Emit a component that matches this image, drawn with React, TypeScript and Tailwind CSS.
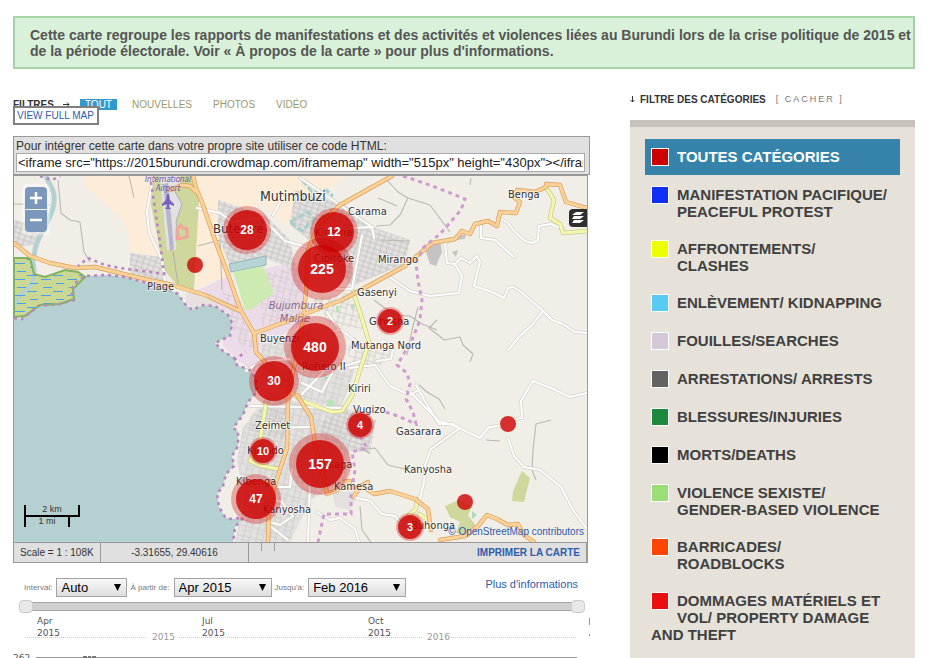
import React from "react";

type Place = { x: number; y: number; name: string; size?: number };
type Cluster = { x: number; y: number; count: number; outer: number; inner: number; size: number };

const places: Place[] = [
  { x: 260, y: 201, name: "Mutimbuzi", size: 14 },
  { x: 213, y: 233, name: "Buterere", size: 13 },
  { x: 348, y: 215, name: "Carama" },
  { x: 315, y: 236, name: "Kinama" },
  { x: 314, y: 262, name: "Cibitoke" },
  { x: 378, y: 263, name: "Mirango" },
  { x: 508, y: 198, name: "Benga" },
  { x: 147, y: 290, name: "Plage" },
  { x: 357, y: 296, name: "Gasenyi" },
  { x: 369, y: 325, name: "Gihosha" },
  { x: 260, y: 342, name: "Buyenzi" },
  { x: 351, y: 349, name: "Mutanga Nord" },
  { x: 302, y: 370, name: "Rohero II" },
  { x: 348, y: 392, name: "Kiriri" },
  { x: 353, y: 413, name: "Vugizo" },
  { x: 255, y: 429, name: "Zeimet" },
  { x: 396, y: 435, name: "Gasarara" },
  { x: 247, y: 454, name: "Kinindo" },
  { x: 404, y: 473, name: "Kanyosha" },
  { x: 314, y: 468, name: "Musaga" },
  { x: 236, y: 485, name: "Kibenga" },
  { x: 334, y: 490, name: "Kamesa" },
  { x: 263, y: 513, name: "Kanyosha" },
  { x: 411, y: 529, name: "Buhonga" },
];

const clusters: Cluster[] = [
  { x: 247, y: 230, count: 28, outer: 24, inner: 20, size: 12 },
  { x: 334, y: 232, count: 12, outer: 24, inner: 20, size: 12 },
  { x: 322, y: 269, count: 225, outer: 31, inner: 24, size: 14 },
  { x: 390, y: 321, count: 2, outer: 14, inner: 12, size: 11 },
  { x: 315, y: 347, count: 480, outer: 31, inner: 24, size: 14 },
  { x: 274, y: 381, count: 30, outer: 25, inner: 20, size: 12 },
  { x: 360, y: 425, count: 4, outer: 14, inner: 12, size: 11 },
  { x: 263, y: 451, count: 10, outer: 14, inner: 12, size: 11 },
  { x: 320, y: 464, count: 157, outer: 31, inner: 24, size: 14 },
  { x: 256, y: 499, count: 47, outer: 25, inner: 20, size: 12 },
  { x: 410, y: 527, count: 3, outer: 14, inner: 12, size: 11 },
];

const coast =
  "M14 318L22 319 38 306 60 304 74 300 71 292 75 283 85 276 108 275 125 277 143 282 165 288 178 294 185 304 192 310 203 305 215 306 228 315 232 323 230 336 215 343 223 351 234 358 237 365 250 370 257 380 256 393 248 402 243 415 233 428 238 431 238 446 232 456 234 466 226 474 223 486 217 494 219 507 225 517 231 519 243 518 235 527 233 542";

const mainRoads = [
  "M14 243L30 256 50 263 75 268 95 267 140 278 172 285 205 295 240 311",
  "M170 190L182 185 190 186 196 192",
  "M193 176L196 188 203 205 215 240 230 280 241 311 254 333 256 352 270 368 284 380",
  "M392 176L340 205 318 225 308 250 306 290 304 312 300 340 293 372 288 398 287 448 274 488 269 510 268 542",
  "M255 333L285 322 320 308 342 300 370 285 405 266 418 255 432 243 455 239 462 231 470 234 475 224 488 221 497 226 500 212 516 213 520 202 513 197 517 190 535 192 546 187 546 184 560 185 566 202 587 208",
  "M297 395L311 417 316 450 322 470 327 494 340 489 344 482 350 481 349 487 365 488 374 494 390 491 415 499 428 509 431 530",
  "M353 497L361 486 368 482",
  "M440 540L465 536 478 526 487 515 497 519 508 525 518 524 524 535 534 542",
];
const yellowRoads = [
  "M353 292L360 312 369 342 360 370 352 396 342 411 332 412 300 400 287 388",
  "M266 404L260 440 250 461 262 466 279 469",
  "M546 187L554 200 550 218 560 224 563 233 587 231",
  "M417 499L416 509 409 515 419 525M419 514L428 520",
];
const whiteRoads = [
  "M153 176L147 212 149 232 162 260 165 281",
  "M300 178L340 205 372 227 374 238M352 228L373 227M362 235L352 289 334 289",
  "M197 208L220 213 233 222 262 218 285 241 318 250M273 215L283 197 300 198",
  "M388 276L410 291 430 296 459 293 462 276 455 264 447 263 445 244 451 239M455 264L461 258 470 263 477 256 480 262 474 286 492 292 504 298 508 288 513 287 520 291 543 311 552 320 563 324 575 332 587 333M543 311L532 325 518 338 508 350",
  "M481 222L481 238 495 240 514 257M498 217L508 223 514 231 525 241 532 243 538 240 539 226 551 224 563 229",
  "M409 391L432 414 439 421 455 426 480 438 489 427 500 426 508 420 522 418 521 401 533 381 551 388 570 397 587 393",
  "M416 385L426 403 439 424 452 424 460 428 431 449 425 465 424 483 419 502",
  "M508 438L514 456 524 467 540 470 561 487 573 510 587 529",
  "M353 497L370 501 382 514 395 516 403 525",
  "M327 332L341 330 353 339 366 348 384 341 393 349 391 359 377 361M327 312L338 329",
  "M350 368L375 365 390 386 410 395 417 391",
  "M246 371L260 362 290 359M250 406L345 408M255 428L311 427M272 487L290 487 292 469",
  "M268 498L282 502 293 516 280 525 270 522M270 526L288 540M310 480L308 542",
  "M317 512L330 520 340 518 355 529 359 542M302 383L322 392 334 369 364 360M302 394L330 365",
];
const greyRoads = [
  "M58 180L61 213 70 220 80 222 84 252 90 262",
  "M14 204L50 205M129 176L134 198",
  "M385 178L398 192 408 198 430 205 450 232M408 198L400 215 390 225 376 226M397 206L378 198M380 240L410 241",
  "M419 385L427 392 439 399 445 409",
  "M374 300L394 315 410 316 422 324 437 330M437 320L429 328 438 335 444 340 460 337 463 345 473 354 470 362",
  "M418 307L412 330 407 355M471 178L470 185",
  "M360 450L375 448 388 465 405 469 420 467M361 447L370 454",
  "M551 420L536 424 533 450 532 470 536 480M500 441L486 440",
  "M360 506L362 530 371 542M198 246L220 240 222 290",
];
const boundary =
  "M403 176L424 183 448 192 465 199 461 210 440 234 424 247 416 263 418 281 422 300 420 320 412 340 402 357 397 365 407 373 410 384 406 399 413 412 416 424 398 416 382 411M360 436L367 448 352 452 355 470 351 495 351 514 324 514 318 542";

const districts = [
  "M295 190L345 205 375 228 410 240 405 264 352 286 316 245 290 225Z",
  "M14 220L38 225 38 245 20 246 14 242Z",
  "M130 253L160 257 166 283 130 276Z",
  "M218 200L265 215 290 240 296 270 265 258 230 267 218 235Z",
  "M262 345L305 330 355 370 340 410 290 395 258 372Z",
  "M268 394L335 412 350 450 345 480 310 500 290 542 235 542 245 500 237 460 243 428Z",
  "M345 408L376 420 370 452 330 450 318 425Z",
  "M360 492L350 510 335 507 332 491Z",
];

const categories = [
  { label: "TOUTES CATÉGORIES", color: "bg-[#cc0000]" },
  { label: "MANIFESTATION PACIFIQUE/ PEACEFUL PROTEST", color: "bg-[#102ff5]" },
  { label: "AFFRONTEMENTS/ CLASHES", color: "bg-[#eeff00]" },
  { label: "ENLÈVEMENT/ KIDNAPPING", color: "bg-[#57cbf2]" },
  { label: "FOUILLES/SEARCHES", color: "bg-[#d4c8d6]" },
  { label: "ARRESTATIONS/ ARRESTS", color: "bg-[#636363]" },
  { label: "BLESSURES/INJURIES", color: "bg-[#1d873b]" },
  { label: "MORTS/DEATHS", color: "bg-black" },
  { label: "VIOLENCE SEXISTE/ GENDER-BASED VIOLENCE", color: "bg-[#9ade77]" },
  { label: "BARRICADES/ ROADBLOCKS", color: "bg-[#ff4400]" },
  { label: "DOMMAGES MATÉRIELS ET VOL/ PROPERTY DAMAGE AND THEFT", color: "bg-[#eb0e0e]" },
];

function Roads({ paths, casing, fill, width }: { paths: string[]; casing: string; fill: string; width: number }) {
  return (
    <g fill="none" strokeLinejoin="round" strokeLinecap="round">
      {paths.map((d) => (
        <path key={"c" + d} d={d} stroke={casing} strokeWidth={width + 1.4} />
      ))}
      {paths.map((d) => (
        <path key={d} d={d} stroke={fill} strokeWidth={width} />
      ))}
    </g>
  );
}

function MapDrawing() {
  return (
    <svg viewBox="14 176 573 366" preserveAspectRatio="xMidYMid slice" className="block h-[366px] w-full">
      <defs>
        <pattern id="streets" width="13" height="10" patternUnits="userSpaceOnUse" patternTransform="rotate(14)">
          <path d="M0 1H13M0 5H8M2 0V10M8 1V10" stroke="#cbc9c7" strokeWidth=".8" fill="none" />
        </pattern>
        <pattern id="blocks" width="6" height="5" patternUnits="userSpaceOnUse" patternTransform="rotate(18)">
          <path d="M0 1H6M1 0V5" stroke="#c3c2c1" strokeWidth=".9" fill="none" />
        </pattern>
        <pattern id="marsh" width="26" height="16" patternUnits="userSpaceOnUse">
          <path d="M1 3.500H11M15 7.500H25M4 11.500H12M17 15.500H26" stroke="#4aa0f0" strokeWidth="1.200" fill="none" />
        </pattern>
      </defs>
      <rect x="14" y="176" width="573" height="366" fill="#f1eee8" />

      <g fill="#fcecd8">
        <path d="M84 176H150L153 200 146 215 155 237 160 257 130 252 130 236 118 215 84 185Z" />
        <path d="M195 176H220L205 196 240 262 228 276 195 288Z" />
        <path d="M222 176H345L300 215 290 228 262 205 215 215 205 196Z" />
      </g>
      <path d="M152 176H193L199 200 194 290 176 284 164 270 157 235 151 205Z" fill="#d0d79c" />
      <path d="M160 176H180V182L174 190 182 205 176 222 176 250 167 250Z" fill="#e3e0e4" />
      <path d="M163 184L168 183 174 249 170 251Z" fill="#b7b5ca" />
      <path d="M174 190L182 204 176 222 179 236M173 251L178 284" fill="none" stroke="#aaa8b4" strokeWidth=".9" />
      <path d="M198 290L228 276 240 311 265 268 296 262 303 285 302 325 262 345 255 372 240 362 222 345 232 325 228 314 212 303Z" fill="#ecdce9" />
      <path d="M195 290L212 303 225 310 205 307 192 310 186 302 185 294Z" fill="#e7e0df" />

      {districts.map((d) => (
        <path key={d} d={d} fill="#e3e1df" />
      ))}
      <g fill="url(#streets)">
        <path d={districts[4]} />
        <path d={districts[5]} />
        <path d="M222 290L240 300 262 350 240 345 232 325Z" />
        <path d="M260 275L300 265 302 325 262 325Z" />
        <path d="M310 300L352 292 366 330 330 325Z" />
        <path d="M345 345L395 350 380 365 352 368Z" />
      </g>
      <g fill="url(#blocks)">
        <path d={districts[0]} />
        <path d={districts[1]} />
        <path d={districts[2]} />
        <path d={districts[3]} />
        <path d={districts[6]} />
        <path d="M268 392L286 392 284 440 250 430Z" />
      </g>
      <path d="M424 246L440 241 442 252 436 266 430 264ZM455 237L466 234 465 239 457 240ZM452 252L458 250 456 257Z" fill="#c6c4c2" />

      <path d="M229 264L266 256 266 265 231 272Z" fill="#b7d4d4" stroke="#8db5b5" />
      <path d="M233 272L263 266 274 292 251 310 245 310Z" fill="#cdebb0" />
      <path d="M290 222L308 212 314 219 302 231ZM302 180L312 192 326 190 333 196" fill="none" stroke="#a9cfcc" strokeWidth="3" strokeDasharray="7 2" />
      <path d="M522 471L530 478 524 502 512 501 513 491ZM445 506L459 500 472 507 468 515 476 526 471 536 456 533 460 522 450 517Z" fill="#d0d79c" />
      <path d="M472 511L477 515 472 519ZM328 399L334 402 331 406ZM324 374L328 378 325 381Z" fill="#a9dcb8" />
      <path d="M327 400h7v6h-7zM336 306h3v6h-3zM351 304h3v5h-3z" fill="#b5e3b5" />

      <path d={coast + "H14Z"} fill="#b5d0d0" />
      <path d="M46 176C50 188 57 190 53 208C49 225 33 240 34 260" fill="none" stroke="#b5d0d0" strokeWidth="5" />
      <path d="M14 258H30L34 274 45 277 65 270 78 272 85 277 73 289 74 299 60 304 40 305 25 316 14 317Z" fill="#cbd893" />
      <path d="M33 260C38 280 30 288 20 295L14 308" fill="none" stroke="#b5d0d0" strokeWidth="4" />
      <path d="M14 258H30L34 274 45 277 65 270 78 272 85 277 73 289 74 299 60 304 40 305 25 316 14 317Z" fill="url(#marsh)" stroke="#7fb35c" strokeWidth="2" />

      <g fill="none" stroke="#bbb8b3" strokeWidth="1.1" strokeLinejoin="round">
        {greyRoads.map((d) => (
          <path key={d} d={d} />
        ))}
      </g>
      <Roads paths={whiteRoads} casing="#d4d1cb" fill="#ffffff" width={2} />
      <Roads paths={yellowRoads} casing="#c9cc8a" fill="#f5f7b0" width={3} />
      <Roads paths={mainRoads} casing="#d6a15b" fill="#fdd197" width={3} />

      <path d={boundary} fill="none" stroke="#cf9ccf" strokeWidth="3" strokeDasharray="4 4" />
      <g fill="none" stroke="#b987bd" strokeWidth="2.600" strokeDasharray="3 4">
        <path d={coast} />
        <path d="M151 182L156 215 161 250 164 274 150 272 120 268 105 265 88 258 78 266" />
        <path d="M40 176L52 180 60 176M234 360L246 352" />
      </g>

      <path
        d="M167 194L169 194 170 200 174 204 174 206 169 204 169 207 171 209 165 209 167 207 167 204 162 206 162 204 166 200Z"
        fill="#7a5fc0"
      />
      <path d="M177 229L181 225 183 228 187 229 187 237 177 239Z" fill="none" stroke="#f3a59a" strokeWidth="3" />

      <g fontFamily="'DejaVu Sans Condensed', 'DejaVu Sans', sans-serif" fontStyle="italic" textAnchor="middle">
        <g fontSize="8" fill="#6a51a8">
          <text x="168" y="182">International</text>
          <text x="168" y="191">Airport</text>
        </g>
        <g fontSize="11" fill="#8a6591">
          <text x="296" y="309">Bujumbura</text>
          <text x="295" y="322">Mairie</text>
        </g>
      </g>
      <g
        fontFamily="'DejaVu Sans Condensed', 'DejaVu Sans', sans-serif"
        fill="#333"
        stroke="#fff"
        strokeOpacity=".6"
        strokeWidth="2"
        paintOrder="stroke"
      >
        {places.map((p) => (
          <text key={p.name + p.x} x={p.x} y={p.y} fontSize={p.size ?? 11}>
            {p.name}
          </text>
        ))}
      </g>

      <g fill="#cc0000" fontFamily="Liberation Sans, Arial, sans-serif">
        {clusters.map((c) => (
          <g key={c.count}>
            <circle cx={c.x} cy={c.y} r={c.outer} fillOpacity=".3" />
            <circle cx={c.x} cy={c.y} r={c.inner} fillOpacity=".8" />
            <text x={c.x} y={c.y + (c.size > 12 ? 5 : 4)} fontSize={c.size} fontWeight="bold" fill="#fff" textAnchor="middle">
              {c.count}
            </text>
          </g>
        ))}
        <circle cx="195" cy="265" r="8" fillOpacity=".8" />
        <circle cx="508" cy="424" r="8" fillOpacity=".8" />
        <circle cx="465" cy="502" r="8" fillOpacity=".8" />
      </g>
    </svg>
  );
}

function Picker({ id, label, value, width }: { id: string; label: string; value: string; width: string }) {
  return (
    <div className="flex items-center gap-1">
      <label htmlFor={id} className="text-[8px] whitespace-nowrap text-[#777]">
        {label}
      </label>
      <div className={"relative " + width}>
        <select
          id={id}
          defaultValue={value}
          className="block h-[19px] w-full appearance-none border border-[#a3a3a3] bg-linear-to-b from-[#f8f8f8] to-[#dedede] pl-1 text-[13px] leading-4 text-black"
        >
          <option>{value}</option>
        </select>
        <svg viewBox="0 0 7 7" className="pointer-events-none absolute top-[6px] right-[6px] size-[7px]">
          <path d="M0 0H7L3.500 7Z" />
        </svg>
      </div>
    </div>
  );
}

const thumb =
  "pointer-events-none absolute inset-0 h-[13px] w-full appearance-none bg-transparent [&::-webkit-slider-thumb]:pointer-events-auto [&::-webkit-slider-thumb]:h-[13px] [&::-webkit-slider-thumb]:w-[14px] [&::-webkit-slider-thumb]:appearance-none [&::-webkit-slider-thumb]:rounded-[4px] [&::-webkit-slider-thumb]:border [&::-webkit-slider-thumb]:border-[#ccc] [&::-webkit-slider-thumb]:bg-[#e8e8e8]";

function Timeline() {
  return (
    <section className="pt-[15px]">
      <div className="flex h-[19px] items-center justify-between pr-3 pl-[11px]">
        <div className="flex items-center gap-[3px]">
          <Picker id="interval" label="Interval:" value="Auto" width="w-[71px]" />
          <Picker id="from" label="À partir de:" value="Apr 2015" width="w-[98px]" />
          <Picker id="to" label="Jusqu'à:" value="Feb 2016" width="w-[98px]" />
        </div>
        <a href="#aide" className="-mt-[6px] text-[11px] text-[#2e5cab]">
          Plus d'informations
        </a>
      </div>
      <div className="relative mt-[3px] mr-[5px] ml-[6px] h-[13px] py-[2px]">
        <div className="mx-[6px] h-[9px] border-y border-[#a5a5a5] bg-[#d0d0d0]" />
        <input type="range" aria-label="Début" min={0} max={10} defaultValue={0} className={thumb} />
        <input type="range" aria-label="Fin" min={0} max={10} defaultValue={10} className={thumb} />
      </div>
      <svg viewBox="13 613 577 60" preserveAspectRatio="xMinYMin slice" className="block h-[60px] w-full" fontFamily="DejaVu Sans, sans-serif" fontSize="9">
        <g fill="#545454">
          <text x="37" y="624">Apr</text>
          <text x="37" y="636">2015</text>
          <text x="202" y="624">Jul</text>
          <text x="202" y="636">2015</text>
          <text x="368" y="624">Oct</text>
          <text x="368" y="636">2015</text>
          <text x="13" y="661">262</text>
        </g>
        <g fill="#999">
          <text x="152" y="640">2015</text>
          <text x="427" y="640">2016</text>
        </g>
        <path d="M589.500 618V625M589.500 634V636" stroke="#d0825a" strokeWidth="1" />
        <path d="M25 637.500H146M179 637.500H422M451 637.500H577" stroke="#ccc" strokeDasharray="1 1" />
        <path d="M36 657.500H577" stroke="#999" strokeWidth="1" />
        <path d="M83 657H87M88 657H91M92 657H96" stroke="#777" strokeWidth="2" />
      </svg>
    </section>
  );
}

export default function App() {
  return (
    <div className="h-screen overflow-hidden bg-white pt-4 pr-[19px] pl-[13px] font-['Liberation_Sans',Arial,sans-serif]">
      <p className="border-2 border-[#a6d3a6] bg-[#d8f1d8] pt-[9px] pb-2 pl-[15px] text-[14px] leading-4 font-bold text-[#555]">
        Cette carte regroupe les rapports de manifestations et des activités et violences liées au Burundi lors de la crise politique de 2015 et
        de la période électorale. Voir « À propos de la carte » pour plus d'informations.
      </p>

      <div className="flex items-start gap-10">
        <main className="min-w-0 flex-1 pt-[30px]">
          <nav className="flex h-[11px] items-center text-[10px] leading-[11px] text-[#999966]">
            <strong className="text-[#333]">FILTRES</strong>
            <svg viewBox="0 0 7 5" className="ml-[9px] h-[5px] w-[7px] fill-none stroke-[#333]">
              <path d="M0 2.500H6M4 .500L6 2.500 4 4.500" />
            </svg>
            <a href="#tout" className="ml-[10px] bg-[#3399cc] px-[5px] text-white">TOUT</a>
            <a href="#nouvelles" className="ml-[15px]">NOUVELLES</a>
            <a href="#photos" className="ml-[21px]">PHOTOS</a>
            <a href="#video" className="ml-[21px]">VIDÉO</a>
          </nav>
          <a
            href="#carte"
            className="relative -mt-1 block h-[19px] w-fit border-2 border-[#808080] bg-white px-[2px] pr-[3px] text-[10px] leading-[15px] text-[#2e5cab]"
          >
            VIEW FULL MAP
          </a>

          <div className="mt-[11px] border border-[#999] bg-[#e0e0e0] px-[2px] pt-[2px] pb-[2px]">
            <label htmlFor="embed" className="block text-[12px] leading-[14px] text-[#333]">
              Pour intégrer cette carte dans votre propre site utiliser ce code HTML:
            </label>
            <input
              id="embed"
              readOnly
              defaultValue={'<iframe src="https://2015burundi.crowdmap.com/iframemap" width="515px" height="430px"></iframe>'}
              className="block h-[19px] w-[569px] max-w-full border border-[#a9a9a9] bg-white px-px text-[13px] text-[#222]"
            />
          </div>

          <div className="mr-[2px] border border-[#999]">
            <div className="relative overflow-hidden">
              <MapDrawing />
              <div className="absolute top-[8px] left-[8px] flex flex-col gap-px rounded bg-white/40 p-[3px]">
                <button aria-label="Zoom avant" className="flex h-[22px] w-[22px] items-center justify-center rounded-t bg-[#7b98bc]">
                  <svg viewBox="0 0 12 12" className="size-3 fill-none stroke-white stroke-[2.5]">
                    <path d="M0 6H12M6 0V12" />
                  </svg>
                </button>
                <button aria-label="Zoom arrière" className="flex h-[22px] w-[22px] items-center justify-center rounded-b bg-[#7b98bc]">
                  <svg viewBox="0 0 12 12" className="size-3 fill-none stroke-white stroke-[2.5]">
                    <path d="M0 5H12" />
                  </svg>
                </button>
              </div>
              <button aria-label="Couches" className="absolute top-[33px] right-0 flex size-[18px] items-center justify-center rounded-l bg-[#2e2e2e]">
                <svg viewBox="0 0 12 12" className="size-3 fill-white">
                  <path d="M4 0H12L8 3H0ZM2 4H12L8 7H0ZM2 8H12L8 11H0Z" />
                </svg>
              </button>
              <div className="absolute bottom-[15px] left-[10px] text-[9px] leading-[9px] text-[#333]">
                <div className="h-[12px] w-[56px] border-x-2 border-b-2 border-black text-center">2 km</div>
                <div className="-mt-[2px] h-[12px] w-[46px] border-x-2 border-t-2 border-black text-center">1 mi</div>
              </div>
              <p className="absolute right-[3px] bottom-[4px] text-[10px] leading-3 text-[#2e5cab]">
                © <a href="#osm">OpenStreetMap contributors</a>
              </p>
            </div>
            <div className="flex h-[20px] items-stretch border-t border-r border-[#999] bg-[#e0e0e0] text-[10px] leading-[19px] text-[#333]">
              <span className="w-[87px] border-r border-[#999] pl-[6px]">Scale = 1 : 108K</span>
              <span className="w-[148px] border-r border-[#999] text-center">-3.31655, 29.40616</span>
              <span className="ml-3 h-[8px] w-[14px] border-x border-[#999]" />
              <a href="#imprimer" className="mr-[6px] ml-auto font-bold text-[#2e5cab]">IMPRIMER LA CARTE</a>
            </div>
          </div>

          <Timeline />
        </main>

        <aside className="w-[285px] shrink-0 pt-[24px]">
          <div className="flex items-center text-[10px] leading-[13px]">
            <svg viewBox="0 0 5 7" className="mr-[5px] h-[7px] w-[5px] fill-none stroke-[#333]">
              <path d="M2.500 0V6M.500 4L2.500 6 4.500 4" />
            </svg>
            <h2 className="font-bold text-[#333]">FILTRE DES CATÉGORIES</h2>
            <a href="#cacher" className="ml-[10px] text-[9px] tracking-[2px] text-[#777]">[ CACHER ]</a>
          </div>
          <ul className="mt-[14px] border-t-[7px] border-[#c7c2bb] bg-[#e6e2da] px-[15px] pt-3 pb-4">
            {categories.map((c, i) => (
              <li key={c.label} className="mb-[2px]">
                <a
                  href={"#categorie-" + i}
                  className={
                    "flow-root py-[9px] pr-[11px] pl-[6px] text-[15px] leading-[17px] font-bold " +
                    (i === 0 ? "bg-[#3583ab] text-white" : "text-[#404040]")
                  }
                >
                  <span className={"float-left mr-2 size-[18px] border border-white " + c.color} />
                  {c.label}
                </a>
              </li>
            ))}
          </ul>
        </aside>
      </div>
    </div>
  );
}
